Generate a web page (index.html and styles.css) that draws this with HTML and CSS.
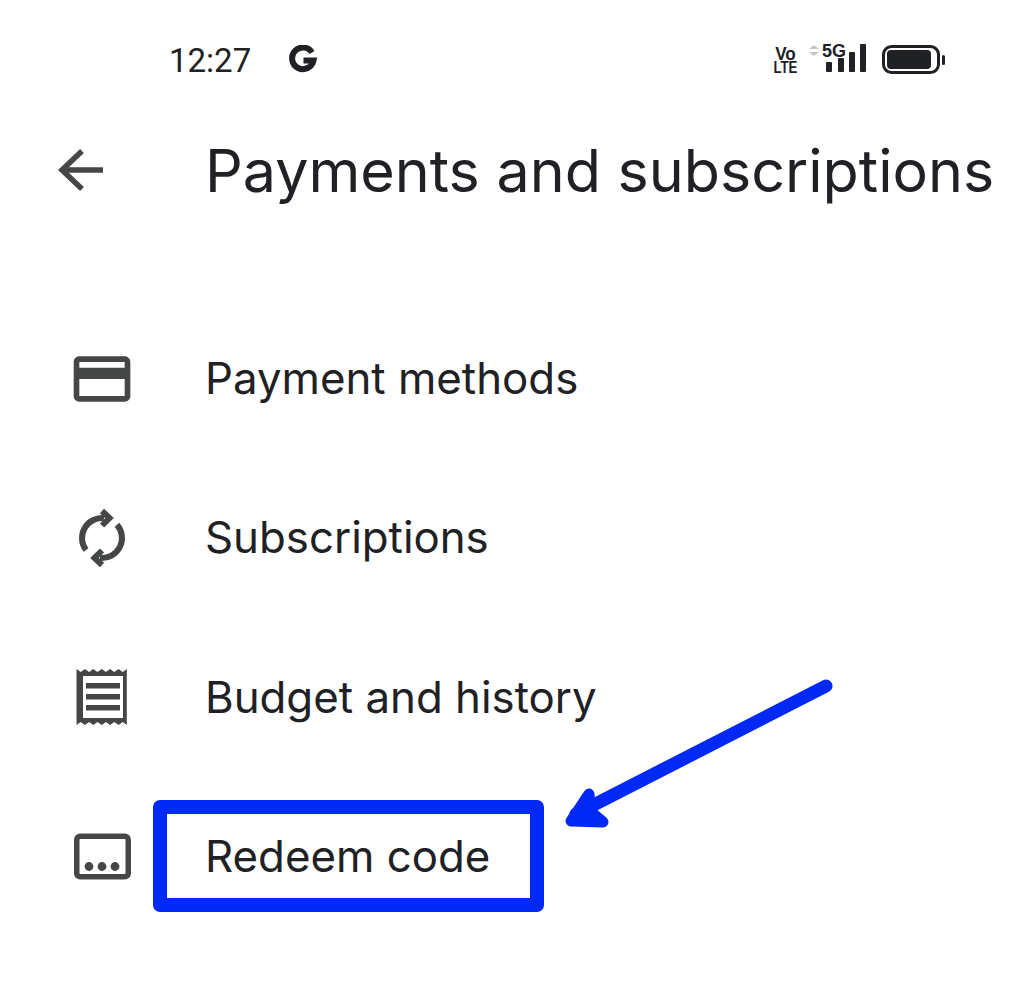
FILE: index.html
```html
<!DOCTYPE html>
<html lang="en">
<head>
<meta charset="utf-8">
<title>Payments and subscriptions</title>
<link rel="stylesheet" href="styles.css">
</head>
<body>
<div class="screen">
  <div class="status">
    <span class="time">12:27</span>
    <svg class="g-logo" width="30" height="30" viewBox="0 0 30 30"><path class="g-stroke" d="M24 7.500A10.800 10.800 0 1 0 25.500 15.500H15.500"/></svg>
    <div class="status-right">
      <div class="volte"><span class="vo">Vo</span><span class="lte">LTE</span></div>
      <svg class="signal" width="60" height="36" viewBox="0 -2 60 36">
        <path class="updown" d="M3 5l5-4 5 4zM3 8l5 4 5-4z"/>
        <text class="five-g" x="16" y="13">5G</text>
        <rect class="bar" x="20" y="18" width="6" height="10" rx="1"/>
        <rect class="bar" x="32" y="14" width="6" height="14" rx="1"/>
        <rect class="bar" x="43" y="8" width="6" height="20" rx="1"/>
        <rect class="bar" x="54" y="0" width="6" height="28" rx="1"/>
      </svg>
      <svg class="battery" width="64" height="30" viewBox="0 0 64 30">
        <rect class="shell" x="1.500" y="1.500" width="55" height="26" rx="8"/>
        <rect class="charge" x="5" y="5" width="44" height="19" rx="4"/>
        <rect class="charge" x="60" y="10" width="3" height="10" rx="1.500"/>
      </svg>
    </div>
  </div>

  <header class="appbar">
    <svg class="back" width="48" height="44" viewBox="0 0 48 44"><path class="icon-stroke" d="M47 22H5M26 3L6 22l20 19"/></svg>
    <h1 class="title">Payments and subscriptions</h1>
  </header>

  <ul class="menu">
    <li class="row">
      <span class="icon-cell">
        <svg class="icon" width="68" height="68" viewBox="0 0 24 24"><path class="icon-fill" d="M20 4H4c-1.110 0-1.990.890-1.990 2L2 18c0 1.110.890 2 2 2h16c1.110 0 2-.890 2-2V6c0-1.110-.890-2-2-2zm0 14H4v-6h16v6zm0-10H4V6h16v2z"/></svg>
      </span>
      <span class="label">Payment methods</span>
    </li>
    <li class="row">
      <span class="icon-cell">
        <svg class="icon" width="68" height="68" viewBox="0 0 68 68">
          <path class="sync-stroke" d="M18 46A20 20 0 0 1 36 14.100"/>
          <path class="sync-stroke" d="M49 20.800A20 20 0 0 1 32 53.900"/>
          <path class="sync-stroke" d="M34 7L41.500 14 34 21.500"/>
          <path class="sync-stroke" d="M34 61L26.500 54 34 46.500"/>
        </svg>
      </span>
      <span class="label">Subscriptions</span>
    </li>
    <li class="row">
      <span class="icon-cell">
        <svg class="icon" width="68" height="68" viewBox="0 0 68 68">
          <path class="icon-fill" d="M8.500 6l4.200 3 4.200-3 4.200 3 4.200-3 4.200 3 4.200-3 4.200 3 4.200-3 4.200 3 4.200-3 4.200 3 4.100-3v56l-4.100-3-4.200 3-4.200-3-4.200 3-4.200-3-4.200 3-4.200-3-4.200 3-4.200-3-4.200 3-4.200-3-4.200 3z"/>
          <rect class="icon-hole" x="15" y="13" width="40" height="42"/>
          <rect class="icon-fill" x="18" y="20" width="34" height="5.500"/>
          <rect class="icon-fill" x="18" y="31" width="34" height="5.500"/>
          <rect class="icon-fill" x="18" y="42" width="34" height="5.500"/>
        </svg>
      </span>
      <span class="label">Budget and history</span>
    </li>
    <li class="row">
      <span class="icon-cell">
        <svg class="icon" width="68" height="68" viewBox="0 0 68 68">
          <rect class="redeem-frame" x="8.750" y="13.250" width="51.500" height="40.500" rx="3.500"/>
          <circle class="icon-fill" cx="21" cy="43.500" r="4.400"/>
          <circle class="icon-fill" cx="34" cy="43.500" r="4.400"/>
          <circle class="icon-fill" cx="47" cy="43.500" r="4.400"/>
        </svg>
      </span>
      <span class="label">Redeem code</span>
    </li>
  </ul>

  <div class="highlight"></div>
  <svg class="pointer" width="290" height="170" viewBox="0 0 290 170">
    <path class="pointer-shaft" d="M280 11L30 139"/>
    <path class="pointer-head" d="M43 119L25 146 57 147 44 136z"/>
  </svg>
</div>
</body>
</html>
```
FILE: styles.css
```css
* { box-sizing: border-box; }

html, body {
  margin: 0;
  padding: 0;
  background: #fff;
}

body {
  font-family: "Inter", "Liberation Sans", sans-serif;
  color: #202124;
}

.screen {
  position: relative;
  width: 1024px;
  height: 987px;
  overflow: hidden;
}

.status {
  display: flex;
  align-items: center;
  height: 120px;
  padding: 0 78px 0 169px;
}

.time {
  font-family: "Roboto", sans-serif;
  font-size: 33px;
}

.g-logo { margin-left: 37px; }

.g-stroke {
  fill: none;
  stroke: #202124;
  stroke-width: 6;
}

.status-right {
  display: flex;
  align-items: center;
  margin-left: auto;
}

.volte {
  display: flex;
  flex-direction: column;
  align-items: center;
  font-family: "Liberation Sans", sans-serif;
  font-weight: 700;
  width: 24px;
}

.vo {
  font-size: 19px;
  line-height: 15px;
  transform: scaleX(0.9);
}

.lte {
  font-size: 17px;
  line-height: 13px;
  transform: scaleX(0.78);
}

.signal { margin-left: 9px; margin-right: 16px; }

.updown { fill: #c4c4c4; }

.five-g {
  font-family: "Liberation Sans", sans-serif;
  font-weight: 700;
  font-size: 18px;
  fill: #202124;
}

.bar, .charge { fill: #202124; }

.shell {
  fill: none;
  stroke: #202124;
  stroke-width: 3;
}

.appbar {
  display: flex;
  align-items: center;
  height: 100px;
  padding-left: 56px;
}

.back { flex: none; }

.title {
  margin: 0 0 0 101px;
  font-size: 59.2px;
  font-weight: 400;
  white-space: nowrap;
}

.icon-stroke {
  fill: none;
  stroke: #444746;
  stroke-width: 5.500;
}

.menu {
  list-style: none;
  margin: 79px 0 0;
  padding: 0;
}

.row {
  display: flex;
  align-items: center;
  gap: 1px;
  height: 159.3px;
}

.icon-cell {
  display: flex;
  justify-content: center;
  flex: none;
  width: 204px;
}

.icon { display: block; }

.icon-fill { fill: #444746; }
.icon-hole { fill: #fff; }

.sync-stroke {
  fill: none;
  stroke: #444746;
  stroke-width: 6;
}

.redeem-frame {
  fill: none;
  stroke: #444746;
  stroke-width: 5.500;
}

.label {
  font-size: 43.8px;
}

.highlight {
  position: absolute;
  left: 153px;
  top: 800px;
  width: 391px;
  height: 112px;
  border: 14px solid #0029f5;
  border-radius: 7px;
}

.pointer {
  position: absolute;
  left: 546px;
  top: 675px;
}

.pointer-shaft {
  fill: none;
  stroke: #0029f5;
  stroke-width: 13;
  stroke-linecap: round;
}

.pointer-head {
  fill: #0029f5;
  stroke: #0029f5;
  stroke-width: 11;
  stroke-linecap: round;
  stroke-linejoin: round;
}
```
